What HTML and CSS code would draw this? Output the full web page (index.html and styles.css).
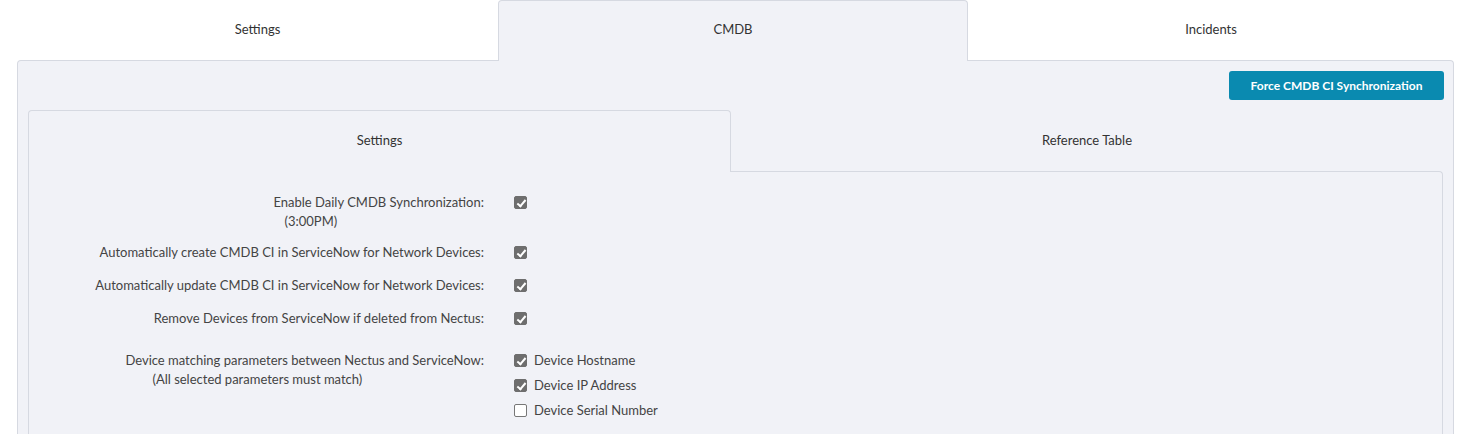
FILE: index.html
```html
<!DOCTYPE html>
<html>
<head>
<meta charset="utf-8">
<link rel="stylesheet" href="styles.css">
</head>
<body>
<div class="page">
  <div class="tabs">
    <div class="tab tab-settings">Settings</div>
    <div class="tab tab-cmdb active">CMDB</div>
    <div class="tab tab-incidents">Incidents</div>
  </div>
  <div class="panel">
    <div class="toolbar">
      <button class="btn-sync">Force CMDB CI Synchronization</button>
    </div>
    <div class="subtabs">
      <div class="subtab sub-settings active">Settings</div>
      <div class="subtab sub-ref">Reference Table</div>
    </div>
    <div class="subpanel">
      <div class="row r1">
        <div class="label"><div class="label-inner">Enable Daily CMDB Synchronization:<div class="sub sub1">(3:00PM)</div></div></div>
        <div class="control"><span class="cb checked"></span></div>
      </div>
      <div class="row r2">
        <div class="label">Automatically create CMDB CI in ServiceNow for Network Devices:</div>
        <div class="control"><span class="cb checked"></span></div>
      </div>
      <div class="row r3">
        <div class="label">Automatically update CMDB CI in ServiceNow for Network Devices:</div>
        <div class="control"><span class="cb checked"></span></div>
      </div>
      <div class="row r4">
        <div class="label">Remove Devices from ServiceNow if deleted from Nectus:</div>
        <div class="control"><span class="cb checked"></span></div>
      </div>
      <div class="row r5">
        <div class="label label-multi"><div class="label-inner">Device matching parameters between Nectus and ServiceNow:<div class="sub sub2">(All selected parameters must match)</div></div></div>
        <div class="control list">
          <div class="item"><span class="cb checked"></span><span class="item-text">Device Hostname</span></div>
          <div class="item"><span class="cb checked"></span><span class="item-text">Device IP Address</span></div>
          <div class="item"><span class="cb"></span><span class="item-text">Device Serial Number</span></div>
        </div>
      </div>
    </div>
  </div>
</div>
</body>
</html>
```

FILE: styles.css
```css
* { box-sizing: border-box; }
html, body { margin: 0; padding: 0; background: #fff; }
body {
  font-family: "Lato", "Open Sans", sans-serif;
  font-size: 13px;
  color: #444;
  height: 434px;
  overflow: hidden;
}
.page {
  margin: 0 4px 0 17px;
}
.tabs {
  display: flex;
  height: 60px;
  position: relative;
  z-index: 2;
}
.tab {
  display: flex;
  align-items: center;
  justify-content: center;
  color: #333;
  padding-bottom: 3px;
}
.tab-settings { width: 481px; }
.tab-cmdb { width: 470px; }
.tab-incidents { flex: 1; }
.tab.active {
  background: #f1f2f7;
  border: 1px solid #d6d9e1;
  border-bottom: none;
  border-radius: 4px 4px 0 0;
  height: 61px;
  padding-bottom: 4px;
}
.panel {
  background: #f1f2f7;
  border: 1px solid #d6d9e1;
  border-bottom: none;
  border-radius: 4px 4px 0 0;
  padding: 10px 9px 0 10px;
  height: 374px;
}
.toolbar {
  display: flex;
  justify-content: flex-end;
}
.btn-sync {
  width: 215px;
  height: 29px;
  background: #0a8ab0;
  border: none;
  border-radius: 3px;
  color: #fff;
  font-family: inherit;
  font-weight: 700;
  font-size: 12px;
  padding: 0;
}
.subtabs {
  display: flex;
  margin-top: 10px;
  height: 61px;
  margin-right: 1px;
  position: relative;
  z-index: 2;
}
.subtab {
  display: flex;
  align-items: center;
  justify-content: center;
  color: #333;
  padding-bottom: 2px;
}
.sub-settings { width: 703px; }
.sub-ref { flex: 1; }
.subtab.active {
  border: 1px solid #d6d9e1;
  border-bottom: none;
  border-radius: 4px 4px 0 0;
  background: #f1f2f7;
  height: 62px;
  padding-bottom: 4px;
}
.subpanel {
  border: 1px solid #d6d9e1;
  border-bottom: none;
  border-radius: 0 4px 0 0;
  margin-right: 1px;
  padding: 21px 0 0 0;
  height: 263px;
}
.row {
  display: flex;
  align-items: flex-start;
  line-height: 19px;
}
.r1 { margin-bottom: 12px; }
.r2, .r3 { margin-bottom: 14px; }
.r4 { margin-bottom: 20px; }
.label {
  width: 455px;
  text-align: right;
  flex: none;
}
.label-inner {
  display: inline-block;
  text-align: left;
}
.sub1 { padding-left: 11px; }
.sub2 { padding-left: 27px; }
.label-multi { padding-top: 3px; }
.control {
  margin-left: 30px;
  height: 19px;
  display: flex;
  align-items: center;
}
.control.list {
  display: block;
  height: auto;
}
.item {
  display: flex;
  align-items: center;
  height: 25px;
}
.item-text {
  margin-left: 7px;
  color: #444;
}
.cb {
  width: 13px;
  height: 13px;
  border-radius: 2px;
  border: 1px solid #777;
  background: #fff;
  display: inline-block;
  position: relative;
  flex: none;
}
.cb.checked {
  background: #6e6e6e;
  border-color: #6e6e6e;
}
.cb.checked::after {
  content: "";
  position: absolute;
  left: 3.5px;
  top: 1px;
  width: 3px;
  height: 7px;
  border: solid #fff;
  border-width: 0 2px 2px 0;
  transform: rotate(40deg);
}
```
